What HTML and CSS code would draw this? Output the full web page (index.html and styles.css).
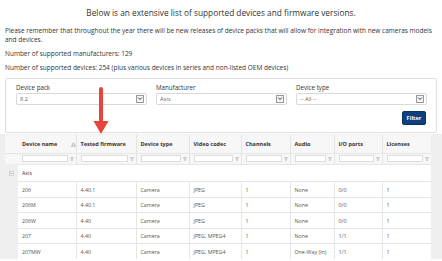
FILE: index.html
```html
<!DOCTYPE html>
<html>
<head>
  <meta charset="UTF-8">
  <title>Supported devices</title>
  <link rel="stylesheet" href="styles.css">
</head>
<body>
  <div class="page">
    <h1 class="title">Below is an extensive list of supported devices and firmware versions.</h1>
    <p class="text">Please remember that throughout the year there will be new releases of device packs that will allow for integration with new cameras models and devices.</p>
    <p class="text">Number of supported manufacturers: 129</p>
    <p class="text">Number of supported devices: 254 (plus various devices in series and non-listed OEM devices)</p>

    <div class="panel">
      <div class="fields">
        <div class="field">
          <div class="label">Device pack</div>
          <div class="select">8.2<span class="caret"><svg viewBox="0 0 8 8" width="7" height="7"><path d="M1.5 2.8 L4 5.3 L6.5 2.8" fill="none" stroke="#333" stroke-width="1.3"/></svg></span></div>
        </div>
        <div class="field">
          <div class="label">Manufacturer</div>
          <div class="select">Axis<span class="caret"><svg viewBox="0 0 8 8" width="7" height="7"><path d="M1.5 2.8 L4 5.3 L6.5 2.8" fill="none" stroke="#333" stroke-width="1.3"/></svg></span></div>
        </div>
        <div class="field">
          <div class="label">Device type</div>
          <div class="select">-- All --<span class="caret"><svg viewBox="0 0 8 8" width="7" height="7"><path d="M1.5 2.8 L4 5.3 L6.5 2.8" fill="none" stroke="#333" stroke-width="1.3"/></svg></span></div>
        </div>
      </div>
      <div class="actions"><button class="btn">Filter</button></div>
      <svg class="arrow" viewBox="0 0 16 48" width="16" height="48">
        <path d="M8 2 L8 36" stroke="#e5453d" stroke-width="4" stroke-linecap="round"/>
        <path d="M0.5 34 L15.5 34 L8 47 Z" fill="#e5453d"/>
      </svg>
    </div>

    <div class="grid">
      <table>
        <colgroup>
          <col class="c-ind"><col class="c-name"><col class="c-fw"><col class="c-type"><col class="c-codec"><col class="c-ch"><col class="c-audio"><col class="c-io"><col class="c-lic">
        </colgroup>
        <thead>
          <tr class="head">
            <th></th>
            <th>Device name <svg class="sort" viewBox="0 0 6 6" width="5" height="5"><path d="M3 1 L5.3 5 L0.7 5 Z" fill="none" stroke="#888" stroke-width="0.7"/></svg></th>
            <th>Tested firmware</th>
            <th>Device type</th>
            <th>Video codec</th>
            <th>Channels</th>
            <th>Audio</th>
            <th>I/O ports</th>
            <th>Licenses</th>
          </tr>
          <tr class="filter-row">
            <td></td>
            <td><div class="fcell"><span class="finput"></span><svg class="funnel" viewBox="0 0 6 6" width="4" height="4"><path d="M0.5 0.8 L5.5 0.8 L3.6 3 L3.6 5.4 L2.4 5.4 L2.4 3 Z" fill="none" stroke="#999" stroke-width="0.7"/></svg></div></td>
            <td><div class="fcell"><span class="finput"></span><svg class="funnel" viewBox="0 0 6 6" width="4" height="4"><path d="M0.5 0.8 L5.5 0.8 L3.6 3 L3.6 5.4 L2.4 5.4 L2.4 3 Z" fill="none" stroke="#999" stroke-width="0.7"/></svg></div></td>
            <td><div class="fcell"><span class="finput"></span><svg class="funnel" viewBox="0 0 6 6" width="4" height="4"><path d="M0.5 0.8 L5.5 0.8 L3.6 3 L3.6 5.4 L2.4 5.4 L2.4 3 Z" fill="none" stroke="#999" stroke-width="0.7"/></svg></div></td>
            <td><div class="fcell"><span class="finput"></span><svg class="funnel" viewBox="0 0 6 6" width="4" height="4"><path d="M0.5 0.8 L5.5 0.8 L3.6 3 L3.6 5.4 L2.4 5.4 L2.4 3 Z" fill="none" stroke="#999" stroke-width="0.7"/></svg></div></td>
            <td><div class="fcell"><span class="finput"></span><svg class="funnel" viewBox="0 0 6 6" width="4" height="4"><path d="M0.5 0.8 L5.5 0.8 L3.6 3 L3.6 5.4 L2.4 5.4 L2.4 3 Z" fill="none" stroke="#999" stroke-width="0.7"/></svg></div></td>
            <td><div class="fcell"><span class="finput"></span><svg class="funnel" viewBox="0 0 6 6" width="4" height="4"><path d="M0.5 0.8 L5.5 0.8 L3.6 3 L3.6 5.4 L2.4 5.4 L2.4 3 Z" fill="none" stroke="#999" stroke-width="0.7"/></svg></div></td>
            <td><div class="fcell"><span class="finput"></span><svg class="funnel" viewBox="0 0 6 6" width="4" height="4"><path d="M0.5 0.8 L5.5 0.8 L3.6 3 L3.6 5.4 L2.4 5.4 L2.4 3 Z" fill="none" stroke="#999" stroke-width="0.7"/></svg></div></td>
            <td><div class="fcell"><span class="finput"></span><svg class="funnel" viewBox="0 0 6 6" width="4" height="4"><path d="M0.5 0.8 L5.5 0.8 L3.6 3 L3.6 5.4 L2.4 5.4 L2.4 3 Z" fill="none" stroke="#999" stroke-width="0.7"/></svg></div></td>
          </tr>
        </thead>
        <tbody>
          <tr class="group">
            <td class="ind"><svg viewBox="0 0 6 6" width="5" height="5"><rect x="0.5" y="0.5" width="5" height="5" fill="#fff" stroke="#aaa" stroke-width="0.6"/><path d="M1.6 3 L4.4 3" stroke="#777" stroke-width="0.7"/></svg></td>
            <td colspan="8">Axis</td>
          </tr>
          <tr><td class="ind"></td><td>206</td><td>4.40.1</td><td>Camera</td><td>JPEG</td><td>1</td><td>None</td><td>0/0</td><td>1</td></tr>
          <tr><td class="ind"></td><td>206M</td><td>4.40.1</td><td>Camera</td><td>JPEG</td><td>1</td><td>None</td><td>0/0</td><td>1</td></tr>
          <tr><td class="ind"></td><td>206W</td><td>4.40</td><td>Camera</td><td>JPEG</td><td>1</td><td>None</td><td>0/0</td><td>1</td></tr>
          <tr><td class="ind"></td><td>207</td><td>4.40</td><td>Camera</td><td>JPEG, MPEG4</td><td>1</td><td>None</td><td>1/1</td><td>1</td></tr>
          <tr><td class="ind"></td><td>207MW</td><td>4.40</td><td>Camera</td><td>JPEG, MPEG4</td><td>1</td><td>One-Way (In)</td><td>1/1</td><td>1</td></tr>
        </tbody>
      </table>
    </div>
  </div>
</body>
</html>
```

FILE: styles.css
```css
* { box-sizing: border-box; }
html, body { margin: 0; padding: 0; background: #fff; }
body { font-family: "Open Sans", "Liberation Sans", sans-serif; color: #333; overflow: hidden; }
.page { padding: 0 5px; }

.title { font-size: 8.3px; font-weight: normal; text-align: center; line-height: 12px; margin: 7.3px 0 6.7px; color: #333; }
.text { font-size: 6.5px; line-height: 9px; margin: 0 0 5px; color: #333; }

.panel { position: relative; margin-top: 6px; border: 1px solid #dedede; border-radius: 2px; padding: 3.8px 10px 7px; background: #fff; }
.fields { display: grid; grid-template-columns: 131px 131px 131px; column-gap: 9px; }
.label { font-size: 6.2px; line-height: 9px; color: #333; margin-bottom: 1px; }
.select { position: relative; height: 12px; border: 1px solid #d9d9d9; border-radius: 2px; font-size: 5.6px; line-height: 10px; padding-left: 3px; color: #666; }
.caret { position: absolute; right: 2px; top: 1px; width: 8px; height: 8px; border: 1px solid #999; background: #f4f4f4; display: flex; align-items: center; justify-content: center; }
.actions { display: flex; justify-content: flex-end; margin-top: 6.5px; }
.btn { font-family: inherit; font-size: 5.6px; font-weight: bold; color: #fff; background: #103f80; border: 1px solid #0b3268; border-radius: 2px; width: 24px; height: 14px; padding: 0; }
.arrow { position: absolute; left: 87px; top: 8px; }

.grid { margin: 1px -5px 0; padding: 1px 11px 0 5px; background: #efefef; }
table { border-collapse: collapse; width: 426px; table-layout: fixed; font-size: 5.3px; }
.c-ind { width: 13px; }
.c-name { width: 58px; }
.c-fw { width: 60px; }
.c-type { width: 53px; }
.c-codec { width: 52px; }
.c-ch { width: 49px; }
.c-audio { width: 44px; }
.c-io { width: 48px; }
.c-lic { width: 49px; }

th { text-align: left; font-weight: bold; font-size: 5.5px; color: #333; height: 18px; padding: 0 4px; background: #f7f7f7; border-left: 1px solid #e3e3e3; white-space: nowrap; }
th:first-child, th:nth-child(2) { border-left: none; }
.sort { margin-left: 12px; vertical-align: -0.5px; }
.filter-row td { height: 11px; padding: 0 2px 0 4px; background: #f7f7f7; border-left: 1px solid #e3e3e3; }
.filter-row td:first-child, .filter-row td:nth-child(2) { border-left: none; }
.fcell { display: flex; align-items: center; gap: 2px; }
.finput { flex: 1; height: 7px; background: #fff; border: 1px solid #dcdcdc; }
.funnel { flex: none; }

td { padding: 0 4px; height: 15.5px; color: #555; white-space: nowrap; background: #fff; border-top: 1px solid #e6e6e6; border-left: 1px solid #e6e6e6; }
td.ind { background: #efefef; border: none; padding: 0; text-align: center; }
tbody tr td:nth-child(2) { border-left: none; }
.group td { height: 17.5px; color: #333; }
.group td.ind svg { vertical-align: middle; }
```
